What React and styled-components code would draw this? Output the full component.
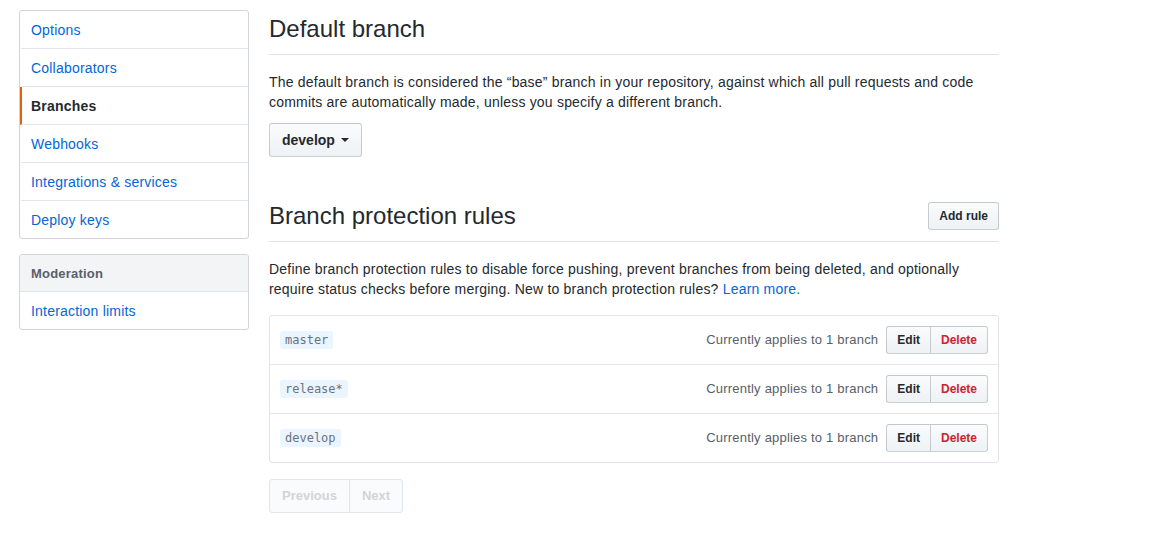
import React from 'react'
import styled, { createGlobalStyle } from 'styled-components'

const GlobalStyle = createGlobalStyle`
    body {
        margin: 0;
        background: #fff;
        font-family: "Liberation Sans", Arial, sans-serif;
        font-size: 14px;
        line-height: 1.5;
        letter-spacing: 0.2px;
        color: #24292e;
    }
`

const menuItems = [
    { label: 'Options' },
    { label: 'Collaborators' },
    { label: 'Branches', selected: true },
    { label: 'Webhooks' },
    { label: 'Integrations & services' },
    { label: 'Deploy keys' },
]

const rules = ['master', 'release*', 'develop']

const App = () => {
    return (
        <>
            <GlobalStyle />
            <Page>
                <Sidebar>
                    <Menu>
                        {menuItems.map(item => (
                            <MenuItem key={item.label} selected={item.selected}>
                                {item.label}
                            </MenuItem>
                        ))}
                    </Menu>
                    <Menu>
                        <MenuHeading>Moderation</MenuHeading>
                        <MenuItem>Interaction limits</MenuItem>
                    </Menu>
                </Sidebar>
                <Main>
                    <Subhead>
                        <SubheadTitle>Default branch</SubheadTitle>
                    </Subhead>
                    <Text>
                        The default branch is considered the “base” branch in your repository, against which all pull requests and code
                        commits are automatically made, unless you specify a different branch.
                    </Text>
                    <Button bold>
                        develop <Caret />
                    </Button>

                    <Subhead spaced>
                        <SubheadTitle>Branch protection rules</SubheadTitle>
                        <SmallButton>Add rule</SmallButton>
                    </Subhead>
                    <Text>
                        Define branch protection rules to disable force pushing, prevent branches from being deleted, and optionally
                        require status checks before merging. New to branch protection rules? <Link>Learn more.</Link>
                    </Text>
                    <RuleList>
                        {rules.map(rule => (
                            <RuleRow key={rule}>
                                <BranchName>{rule}</BranchName>
                                <RuleActions>
                                    <Applies>Currently applies to 1 branch</Applies>
                                    <ButtonGroup>
                                        <GroupButton>Edit</GroupButton>
                                        <GroupButton danger>Delete</GroupButton>
                                    </ButtonGroup>
                                </RuleActions>
                            </RuleRow>
                        ))}
                    </RuleList>
                    <Pagination>
                        <PageButton>Previous</PageButton>
                        <PageButton>Next</PageButton>
                    </Pagination>
                </Main>
            </Page>
        </>
    )
}

export default App

const Page = styled.div`
    display: flex;
    align-items: flex-start;
    padding: 10px 0 0 19px;
    gap: 20px;
`

const Sidebar = styled.div`
    width: 230px;
    display: flex;
    flex-direction: column;
    gap: 15px;
`

const Menu = styled.nav`
    border: 1px solid #d1d5da;
    border-radius: 3px;
    background: #fff;
    overflow: hidden;
`

const MenuItem = styled.div`
    height: 38px;
    box-sizing: border-box;
    display: flex;
    align-items: center;
    padding: 1px 9px 0;
    color: ${({ selected }) => (selected ? '#24292e' : '#0366d6')};
    font-weight: ${({ selected }) => (selected ? 600 : 400)};
    border-left: 2px solid ${({ selected }) => (selected ? '#e36209' : 'transparent')};
    border-bottom: 1px solid #e1e4e8;

    &:last-child {
        border-bottom: none;
        height: 37px;
    }
`

const MenuHeading = styled.div`
    height: 37px;
    box-sizing: border-box;
    display: flex;
    align-items: center;
    padding: 1px 11px 0;
    font-size: 13px;
    font-weight: 600;
    color: #586069;
    background: #f3f4f6;
    border-bottom: 1px solid #e1e4e8;
`

const Main = styled.div`
    width: 730px;
`

const Subhead = styled.div`
    display: flex;
    align-items: center;
    justify-content: space-between;
    border-bottom: 1px solid #e1e4e8;
    padding-bottom: 8px;
    margin-top: ${({ spaced }) => (spaced ? '42px' : '2px')};
    margin-bottom: 17px;
`

const SubheadTitle = styled.h2`
    margin: 0;
    font-size: 24px;
    font-weight: 400;
    line-height: 34px;
    letter-spacing: 0;
`

const Text = styled.p`
    margin: 0;
    line-height: 20px;
`

const Link = styled.a`
    color: #0366d6;
`

const Button = styled.button`
    display: inline-flex;
    align-items: center;
    gap: 6px;
    height: 34px;
    margin-top: 11px;
    padding: 0 12px;
    font-family: inherit;
    font-size: 14px;
    font-weight: ${({ bold }) => (bold ? 600 : 400)};
    color: #24292e;
    background: linear-gradient(#fafbfc, #eff3f6 90%);
    border: 1px solid rgba(27, 31, 35, 0.2);
    border-radius: 3px;
`

const Caret = styled.span`
    width: 0;
    height: 0;
    border-left: 4px solid transparent;
    border-right: 4px solid transparent;
    border-top: 4px solid #24292e;
`

const SmallButton = styled(Button)`
    height: 28px;
    margin-top: 0;
    padding: 0 10px;
    font-size: 12px;
    font-weight: 600;
`

const RuleList = styled.div`
    margin-top: 16px;
    border: 1px solid #e1e4e8;
    border-radius: 3px;
`

const RuleRow = styled.div`
    height: 48px;
    display: flex;
    align-items: center;
    justify-content: space-between;
    padding: 0 10px;
    border-bottom: 1px solid #e1e4e8;

    &:last-child {
        border-bottom: none;
    }
`

const BranchName = styled.code`
    font-family: "DejaVu Sans Mono", "Liberation Mono", monospace;
    font-size: 12px;
    line-height: 18px;
    letter-spacing: 0;
    padding: 0 5px;
    color: #6a737d;
    background: #eaf5ff;
    border-radius: 3px;
`

const RuleActions = styled.div`
    display: flex;
    align-items: center;
    gap: 8px;
`

const Applies = styled.span`
    font-size: 13px;
    color: #586069;
`

const ButtonGroup = styled.div`
    display: flex;
`

const GroupButton = styled.button`
    height: 28px;
    padding: 0 10px;
    font-family: inherit;
    font-size: 12px;
    font-weight: 600;
    color: ${({ danger }) => (danger ? '#cb2431' : '#24292e')};
    background: linear-gradient(#fafbfc, #eff3f6 90%);
    border: 1px solid rgba(27, 31, 35, 0.2);
    border-radius: 3px 0 0 3px;

    & + & {
        margin-left: -1px;
        border-radius: 0 3px 3px 0;
    }
`

const Pagination = styled.div`
    display: inline-flex;
    margin-top: 16px;
`

const PageButton = styled.span`
    height: 32px;
    display: flex;
    align-items: center;
    padding: 0 12px;
    font-size: 13px;
    font-weight: 600;
    letter-spacing: 0;
    color: #d1d5da;
    background: #fafbfc;
    border: 1px solid #e1e4e8;
    border-radius: 3px 0 0 3px;

    & + & {
        margin-left: -1px;
        border-radius: 0 3px 3px 0;
    }
`
